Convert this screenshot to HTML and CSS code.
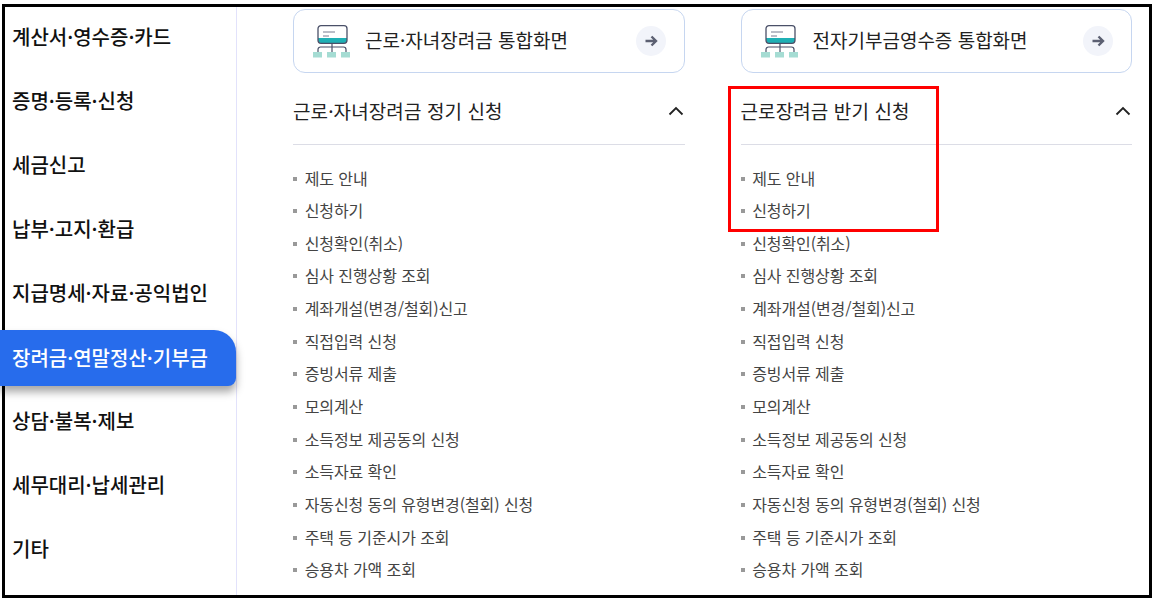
FILE: index.html
```html
<!DOCTYPE html>
<html lang="ko">
<head>
    <meta charset="UTF-8">
    <title>장려금·연말정산·기부금</title>
    <link rel="stylesheet" href="styles.css">
</head>
<body>
    <div class="frame">
        <ul class="side-menu">
            <li>계산서·영수증·카드</li>
            <li>증명·등록·신청</li>
            <li>세금신고</li>
            <li>납부·고지·환급</li>
            <li>지급명세·자료·공익법인</li>
            <li class="active">장려금·연말정산·기부금</li>
            <li>상담·불복·제보</li>
            <li>세무대리·납세관리</li>
            <li>기타</li>
        </ul>

        <div class="content">
            <div class="column">
                <a class="link-card">
                    <svg class="card-icon" width="38" height="33" viewBox="0 0 38 33">
                        <path d="M19 18v9M5 27v-2.500a2.500 2.500 0 0 1 2.500-2.500h23a2.500 2.500 0 0 1 2.500 2.500V27" fill="none" stroke="#4a5068" stroke-width="1.200"/>
                        <path d="M5 13h29v2a3 3 0 0 1-3 3H8a3 3 0 0 1-3-3z" fill="#1fb0b5"/>
                        <rect x="5" y="0.700" width="29" height="17.600" rx="3" fill="none" stroke="#4a5068" stroke-width="1.300"/>
                        <path d="M10 7h12M10 11h6" stroke="#777c90" stroke-width="1"/>
                        <path d="M0 27h9v5.500H0zM14 27h9v5.500h-9zM28 27h9v5.500h-9z" fill="#a5dcd3"/>
                    </svg>
                    <span class="card-title">근로·자녀장려금 통합화면</span>
                    <span class="card-arrow">
                        <svg width="14" height="14" viewBox="0 0 14 14"><path d="M1.500 7h10M7.500 2.500L12 7l-4.500 4.500" fill="none" stroke="#5c6072" stroke-width="2.400"/></svg>
                    </span>
                </a>
                <div class="section-head">
                    <h3>근로·자녀장려금 정기 신청</h3>
                    <svg width="16" height="10" viewBox="0 0 16 10"><path d="M1.500 8.500L8 2l6.500 6.500" fill="none" stroke="#222" stroke-width="1.800"/></svg>
                </div>
                <ul class="sub-menu">
                    <li>제도 안내</li>
                    <li>신청하기</li>
                    <li>신청확인(취소)</li>
                    <li>심사 진행상황 조회</li>
                    <li>계좌개설(변경/철회)신고</li>
                    <li>직접입력 신청</li>
                    <li>증빙서류 제출</li>
                    <li>모의계산</li>
                    <li>소득정보 제공동의 신청</li>
                    <li>소득자료 확인</li>
                    <li>자동신청 동의 유형변경(철회) 신청</li>
                    <li>주택 등 기준시가 조회</li>
                    <li>승용차 가액 조회</li>
                </ul>
            </div>

            <div class="column">
                <a class="link-card">
                    <svg class="card-icon" width="38" height="33" viewBox="0 0 38 33">
                        <path d="M19 18v9M5 27v-2.500a2.500 2.500 0 0 1 2.500-2.500h23a2.500 2.500 0 0 1 2.500 2.500V27" fill="none" stroke="#4a5068" stroke-width="1.200"/>
                        <path d="M5 13h29v2a3 3 0 0 1-3 3H8a3 3 0 0 1-3-3z" fill="#1fb0b5"/>
                        <rect x="5" y="0.700" width="29" height="17.600" rx="3" fill="none" stroke="#4a5068" stroke-width="1.300"/>
                        <path d="M10 7h12M10 11h6" stroke="#777c90" stroke-width="1"/>
                        <path d="M0 27h9v5.500H0zM14 27h9v5.500h-9zM28 27h9v5.500h-9z" fill="#a5dcd3"/>
                    </svg>
                    <span class="card-title">전자기부금영수증 통합화면</span>
                    <span class="card-arrow">
                        <svg width="14" height="14" viewBox="0 0 14 14"><path d="M1.500 7h10M7.500 2.500L12 7l-4.500 4.500" fill="none" stroke="#5c6072" stroke-width="2.400"/></svg>
                    </span>
                </a>
                <div class="section-head">
                    <h3>근로장려금 반기 신청</h3>
                    <svg width="16" height="10" viewBox="0 0 16 10"><path d="M1.500 8.500L8 2l6.500 6.500" fill="none" stroke="#222" stroke-width="1.800"/></svg>
                </div>
                <ul class="sub-menu">
                    <li>제도 안내</li>
                    <li>신청하기</li>
                    <li>신청확인(취소)</li>
                    <li>심사 진행상황 조회</li>
                    <li>계좌개설(변경/철회)신고</li>
                    <li>직접입력 신청</li>
                    <li>증빙서류 제출</li>
                    <li>모의계산</li>
                    <li>소득정보 제공동의 신청</li>
                    <li>소득자료 확인</li>
                    <li>자동신청 동의 유형변경(철회) 신청</li>
                    <li>주택 등 기준시가 조회</li>
                    <li>승용차 가액 조회</li>
                </ul>
            </div>
        </div>

        <div class="highlight"></div>
    </div>
</body>
</html>
```

FILE: styles.css
```css
* {
    margin: 0;
    padding: 0;
    box-sizing: border-box;
    font-family: "Noto Sans CJK KR", "Noto Sans", sans-serif;
}

html, body {
    height: 598px;
    overflow: hidden;
    background-color: #FFFFFF;
}

ul {
    list-style: none;
}

.frame {
    position: relative;
    display: flex;
    width: 1150px;
    height: 594px;
    margin: 4px 0 0 2px;
    border: 3px solid #000000;
}

/* left menu */
.side-menu {
    display: flex;
    flex-direction: column;
    flex: none;
    width: 232px;
    padding-top: 1px;
    border-right: 1px solid #E2E2FB;
}

.side-menu li {
    display: flex;
    align-items: center;
    flex: none;
    width: 231px;
    height: 56px;
    margin-bottom: 8.100px;
    padding-left: 7px;
    font-size: 20px;
    font-weight: 500;
    color: #111111;
}

/* active item runs over the black frame */
.side-menu li.active {
    width: 236px;
    margin: 2px 0 6.100px -5px;
    padding: 0 0 2px 12px;
    background-color: #276CEC;
    color: #FFFFFF;
    border-radius: 0 22px 8px 0;
    box-shadow: 0 6px 8px rgba(0, 0, 0, 0.35);
}

/* right side */
.content {
    display: flex;
    gap: 56px;
    padding: 2px 0 0 56px;
}

.column {
    width: 391.500px;
}

.link-card {
    display: flex;
    align-items: center;
    height: 64px;
    padding: 0 18px 0 19px;
    border: 1px solid #C6D6F0;
    border-radius: 12px;
}

.card-icon {
    flex: none;
    margin-right: 14px;
}

.card-title {
    flex: 1;
    padding-bottom: 3px;
    font-size: 19px;
    color: #222222;
}

.card-arrow {
    display: flex;
    align-items: center;
    justify-content: center;
    width: 30px;
    height: 30px;
    border-radius: 50%;
    background-color: #F2F4FA;
}

.section-head {
    display: flex;
    align-items: center;
    justify-content: space-between;
    height: 72px;
    padding: 4px 1px 0 0;
    border-bottom: 1px solid #DCDDE6;
}

.section-head h3 {
    font-size: 19px;
    font-weight: 400;
    letter-spacing: 0.100px;
    color: #222222;
}

.sub-menu {
    padding-top: 16.500px;
}

.sub-menu li {
    position: relative;
    height: 32.650px;
    padding-left: 11.700px;
    font-size: 16px;
    line-height: 32px;
    letter-spacing: -0.100px;
    color: #444444;
}

.sub-menu li::before {
    content: "";
    position: absolute;
    left: 0;
    top: 15px;
    width: 4px;
    height: 4px;
    background-color: #999999;
}

/* red box drawn over the page */
.highlight {
    position: absolute;
    left: 723px;
    top: 79px;
    width: 211px;
    height: 146px;
    border: 3px solid #FF0000;
}
```
